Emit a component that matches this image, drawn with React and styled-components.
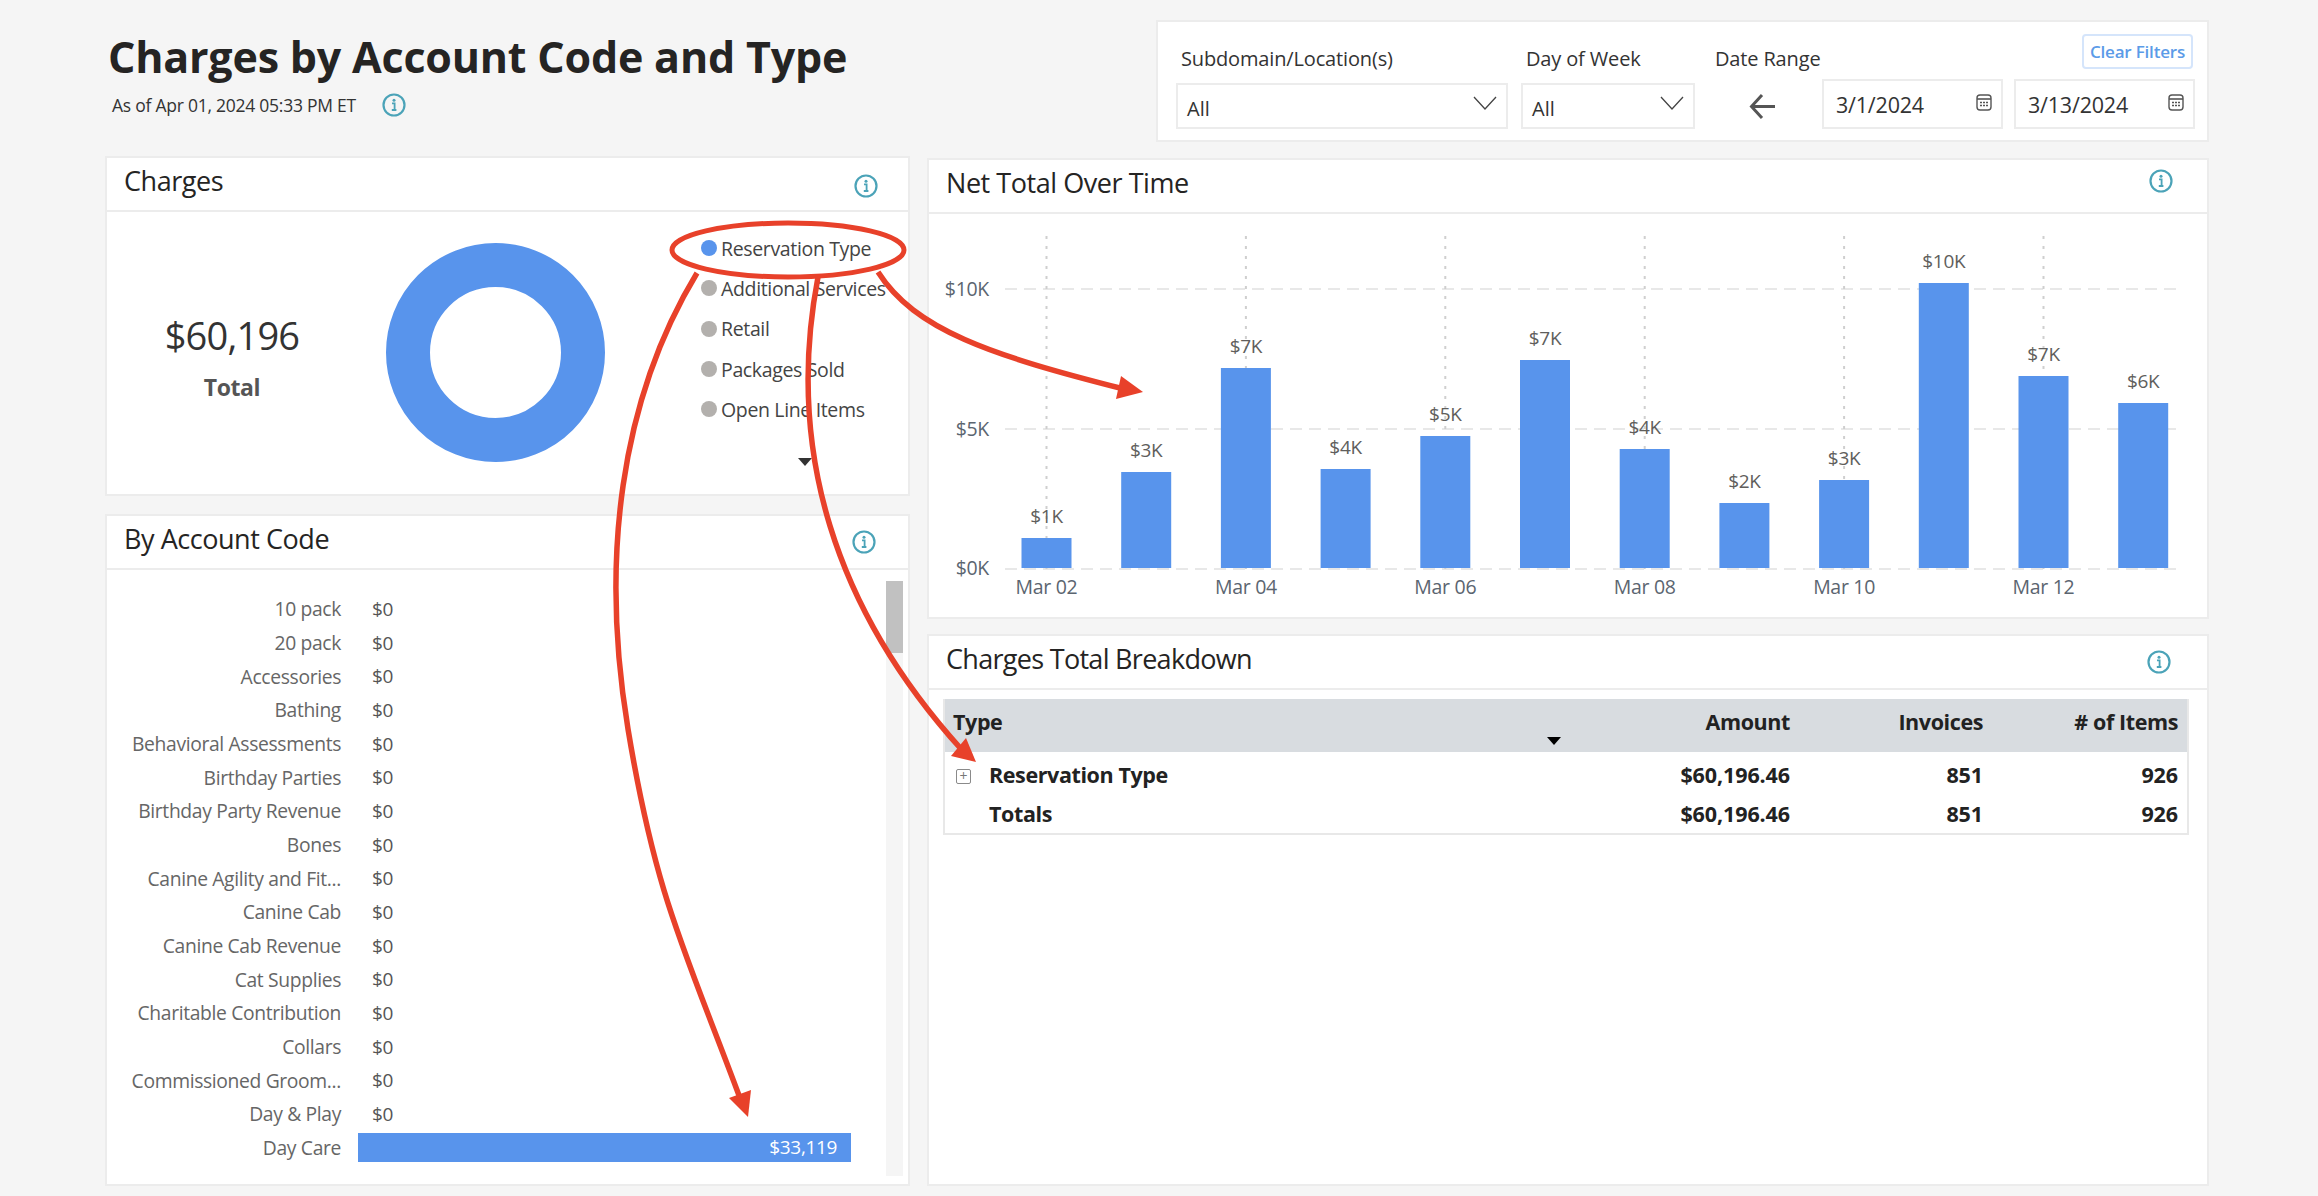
import React from "react";
import styled, { createGlobalStyle } from "styled-components";

const GlobalStyle = createGlobalStyle`
	html, body {
		margin: 0;
		padding: 0;
		background: #f5f5f5;
	}
	body {
		font-family: "Open Sans", "Noto Sans", "Liberation Sans", sans-serif;
		color: #252423;
	}
`;

const BLUE = "#5894ec";
const RED = "#e8412a";

const accountRows = [
	"10 pack",
	"20 pack",
	"Accessories",
	"Bathing",
	"Behavioral Assessments",
	"Birthday Parties",
	"Birthday Party Revenue",
	"Bones",
	"Canine Agility and Fit...",
	"Canine Cab",
	"Canine Cab Revenue",
	"Cat Supplies",
	"Charitable Contribution",
	"Collars",
	"Commissioned Groom...",
	"Day & Play",
];

const legendItems = [
	{ label: "Reservation Type", active: true },
	{ label: "Additional Services" },
	{ label: "Retail" },
	{ label: "Packages Sold" },
	{ label: "Open Line Items" },
];

const bars = [
	{ h: 30, label: "$1K" },
	{ h: 96, label: "$3K" },
	{ h: 200, label: "$7K" },
	{ h: 99, label: "$4K" },
	{ h: 132, label: "$5K" },
	{ h: 208, label: "$7K" },
	{ h: 119, label: "$4K" },
	{ h: 65, label: "$2K" },
	{ h: 88, label: "$3K" },
	{ h: 285, label: "$10K" },
	{ h: 192, label: "$7K" },
	{ h: 165, label: "$6K" },
];

const dates = ["Mar 02", "Mar 04", "Mar 06", "Mar 08", "Mar 10", "Mar 12"];

const InfoIcon = () => (
	<svg width="26" height="26" viewBox="0 0 26 26" fill="none">
		<circle cx="13" cy="13" r="10.5" stroke="#4ba3b8" strokeWidth="2.2" />
		<circle cx="13" cy="8.2" r="1.5" fill="#4ba3b8" />
		<path d="M11 11.4h2.6v6.4M10.8 18h4.6" stroke="#4ba3b8" strokeWidth="1.8" />
	</svg>
);

const Chevron = () => (
	<svg width="24" height="15" viewBox="0 0 24 15" fill="none">
		<path d="M1 1l11 12L23 1" stroke="#444" strokeWidth="1.3" />
	</svg>
);

const CalendarIcon = () => (
	<svg width="16" height="17" viewBox="0 0 16 17" fill="none">
		<rect x="1" y="1" width="14" height="15" rx="3" stroke="#555" strokeWidth="1.4" />
		<path d="M1 5h14" stroke="#555" strokeWidth="1.6" />
		<path d="M4 8.5h2M7 8.5h2M10 8.5h2M4 11.5h2M7 11.5h2M10 11.5h2" stroke="#555" strokeWidth="1.3" />
	</svg>
);

const Chart = () => (
	<ChartSvg viewBox="0 0 1278 402">
		{[75, 215, 355].map((y) => (
			<line key={y} x1="76" x2="1254" y1={y} y2={y} stroke="#e8e8e8" strokeWidth="2" strokeDasharray="12 7" />
		))}
		{dates.map((d, i) => (
			<line key={d} x1={117.5 + i * 199.4} x2={117.5 + i * 199.4} y1="22" y2="360" stroke="#cfcfcf" strokeWidth="2" strokeDasharray="3 7" />
		))}
		{bars.map((b, i) => {
			const x = 92.5 + i * 99.7;
			const top = 354 - b.h;
			return (
				<g key={i}>
					<rect x={x} y={top} width="50" height={b.h} fill={BLUE} />
					<ChartLabel x={x + 25} y={top - 15} textAnchor="middle">
						{b.label}
					</ChartLabel>
				</g>
			);
		})}
		{[
			["$10K", 82],
			["$5K", 222],
			["$0K", 361],
		].map(([t, y]) => (
			<ChartAxis key={t} x="60" y={y} textAnchor="end">
				{t}
			</ChartAxis>
		))}
		{dates.map((d, i) => (
			<ChartAxis key={d} x={117.5 + i * 199.4} y="380" textAnchor="middle">
				{d}
			</ChartAxis>
		))}
	</ChartSvg>
);

const Annotations = () => (
	<Overlay viewBox="0 0 2318 1196">
		<ellipse cx="788" cy="250" rx="116" ry="27" fill="none" stroke={RED} strokeWidth="5" />
		<g fill="none" stroke={RED} strokeWidth="5.5">
			<path d="M878 272C915 330 990 355 1124 389" />
			<path d="M697 273C620 400 600 560 628 729S685 950 740 1098" />
			<path d="M818 277C785 450 835 610 962 750" />
		</g>
		<g fill={RED}>
			<path d="M1143 392L1121 376L1116 399Z" />
			<path d="M748 1117L729 1098L751 1090Z" />
			<path d="M976 762L951 756L966 738Z" />
		</g>
	</Overlay>
);

export default function App() {
	return (
		<Page>
			<GlobalStyle />
			<TopRow>
				<div>
					<PageTitle>Charges by Account Code and Type</PageTitle>
					<AsOf>
						As of Apr 01, 2024 05:33 PM ET
						<InfoIcon />
					</AsOf>
				</div>
				<Filters>
					<Field $width={332}>
						<FieldLabel>Subdomain/Location(s)</FieldLabel>
						<Select>
							All
							<Chevron />
						</Select>
					</Field>
					<Field $width={174}>
						<FieldLabel>Day of Week</FieldLabel>
						<Select>
							All
							<Chevron />
						</Select>
					</Field>
					<DateGroup>
						<DateHead>
							<DateLabel>Date Range</DateLabel>
							<ClearButton>Clear Filters</ClearButton>
						</DateHead>
						<DateInputs>
							<BackArrow width="27" height="27" viewBox="0 0 27 27" fill="none">
								<path d="M26 13.5H3M13 2L2.5 13.5 13 25" stroke="#555" strokeWidth="3" />
							</BackArrow>
							<DateInput>
								3/1/2024
								<CalendarIcon />
							</DateInput>
							<DateInput>
								3/13/2024
								<CalendarIcon />
							</DateInput>
						</DateInputs>
					</DateGroup>
				</Filters>
			</TopRow>

			<Columns>
				<LeftColumn>
					<Card $height={340}>
						<CardHeader $iconRight={29} $iconShift={4}>
							<CardTitle>Charges</CardTitle>
							<InfoIcon />
						</CardHeader>
						<ChargesBody>
							<TotalBlock>
								<TotalValue>$60,196</TotalValue>
								<TotalLabel>Total</TotalLabel>
							</TotalBlock>
							<Donut width="219" height="219" viewBox="0 0 219 219">
								<circle cx="109.5" cy="109.5" r="87.5" fill="none" stroke={BLUE} strokeWidth="44" />
							</Donut>
							<Legend>
								{legendItems.map((item) => (
									<LegendItem key={item.label}>
										<LegendDot $active={item.active} />
										{item.label}
									</LegendItem>
								))}
								<LegendMore />
							</Legend>
						</ChargesBody>
					</Card>
					<Card $height={672}>
						<CardHeader $iconRight={31} $iconShift={0}>
							<CardTitle>By Account Code</CardTitle>
							<InfoIcon />
						</CardHeader>
						<AccountBody>
							<AccountList>
								{accountRows.map((name) => (
									<AccountRow key={name}>
										<AccountName>{name}</AccountName>
										<AccountZero>$0</AccountZero>
									</AccountRow>
								))}
								<AccountRow>
									<AccountName>Day Care</AccountName>
									<AccountBar>$33,119</AccountBar>
								</AccountRow>
							</AccountList>
							<ScrollTrack>
								<ScrollThumb />
							</ScrollTrack>
						</AccountBody>
					</Card>
				</LeftColumn>

				<RightColumn>
					<Card $height={461}>
						<CardHeader $iconRight={33} $iconShift={-10}>
							<CardTitle>Net Total Over Time</CardTitle>
							<InfoIcon />
						</CardHeader>
						<Chart />
					</Card>
					<Card $height={552}>
						<CardHeader $iconRight={35} $iconShift={0}>
							<CardTitle $tight>Charges Total Breakdown</CardTitle>
							<InfoIcon />
						</CardHeader>
						<TableWrap>
							<Table>
								<colgroup>
									<col width="595" />
									<col width="260" />
									<col width="193" />
									<col />
								</colgroup>
								<thead>
									<tr>
										<HeadCell $left>
											Type
											<SortMark />
										</HeadCell>
										<HeadCell>Amount</HeadCell>
										<HeadCell>Invoices</HeadCell>
										<HeadCell># of Items</HeadCell>
									</tr>
								</thead>
								<tbody>
									<tr>
										<TypeCell>
											<ExpandBox>+</ExpandBox>
											Reservation Type
										</TypeCell>
										<NumCell>$60,196.46</NumCell>
										<NumCell>851</NumCell>
										<NumCell>926</NumCell>
									</tr>
									<tr>
										<TypeCell>Totals</TypeCell>
										<NumCell>$60,196.46</NumCell>
										<NumCell>851</NumCell>
										<NumCell>926</NumCell>
									</tr>
								</tbody>
							</Table>
						</TableWrap>
					</Card>
				</RightColumn>
			</Columns>
			<Annotations />
		</Page>
	);
}

const Page = styled.div`
	position: relative;
	width: 2318px;
	height: 1196px;
	box-sizing: border-box;
	padding: 20px 109px 0 105px;
	overflow: hidden;
	background: #f5f5f5;
`;

const Overlay = styled.svg`
	position: absolute;
	left: 0;
	top: 0;
	width: 2318px;
	height: 1196px;
	pointer-events: none;
`;

const TopRow = styled.div`
	display: flex;
	justify-content: space-between;
	height: 136px;
`;

const PageTitle = styled.h1`
	margin: 9px 0 1px 3px;
	font-size: 43px;
	line-height: 56px;
	font-weight: 700;
	letter-spacing: -0.2px;
	white-space: nowrap;
`;

const AsOf = styled.div`
	display: flex;
	align-items: center;
	gap: 25px;
	height: 38px;
	margin-left: 7px;
	font-size: 17.5px;
	letter-spacing: -0.25px;
	color: #333;
`;

const Filters = styled.div`
	display: flex;
	box-sizing: border-box;
	width: 1053px;
	height: 122px;
	padding: 12px 10px 0 18px;
	gap: 13px;
	background: #fff;
	border: 2px solid #ececec;
`;

const Field = styled.div`
	width: ${(p) => p.$width}px;
	padding-top: 12px;
`;

const FieldLabel = styled.div`
	height: 26px;
	margin-left: 5px;
	margin-bottom: 11px;
	font-size: 20px;
	line-height: 26px;
	font-weight: 500;
	letter-spacing: -0.15px;
	color: #333;
	white-space: nowrap;
`;

const Select = styled.div`
	display: flex;
	align-items: center;
	justify-content: space-between;
	box-sizing: border-box;
	height: 46px;
	padding: 4px 9px 0 9px;
	border: 2px solid #ececec;
	background: #fff;
	font-size: 20px;
	color: #333;
	svg {
		margin-top: -10px;
	}
`;

const DateGroup = styled.div`
	width: 481px;
	margin-left: 7px;
`;

const DateHead = styled.div`
	display: flex;
	justify-content: space-between;
	height: 45px;
	padding-right: 3px;
`;

const DateLabel = styled.div`
	margin-top: 12px;
	font-size: 20px;
	line-height: 26px;
	font-weight: 500;
	letter-spacing: -0.15px;
	color: #333;
`;

const ClearButton = styled.button`
	box-sizing: border-box;
	width: 111px;
	height: 35px;
	padding: 0;
	border: 2px solid #d5e5fb;
	border-radius: 4px;
	background: #fff;
	color: #5b9be8;
	font-family: inherit;
	font-size: 17px;
	font-weight: 600;
	letter-spacing: -0.2px;
	white-space: nowrap;
`;

const DateInputs = styled.div`
	display: flex;
	align-items: flex-start;
	gap: 11px;
`;

const BackArrow = styled.svg`
	margin: 14px 35px 0 34px;
`;

const DateInput = styled.div`
	display: flex;
	align-items: center;
	justify-content: space-between;
	box-sizing: border-box;
	width: 181px;
	height: 50px;
	padding: 0 9px 0 12px;
	border: 2px solid #ececec;
	background: #fff;
	font-size: 21.5px;
	letter-spacing: -0.2px;
	color: #333;
	svg {
		margin-top: -4px;
	}
`;

const Columns = styled.div`
	display: flex;
	gap: 17px;
`;

const LeftColumn = styled.div`
	display: flex;
	flex-direction: column;
	gap: 18px;
	width: 805px;
`;

const RightColumn = styled.div`
	display: flex;
	flex-direction: column;
	gap: 15px;
	width: 1282px;
	margin-top: 2px;
`;

const Card = styled.section`
	box-sizing: border-box;
	height: ${(p) => p.$height}px;
	background: #fff;
	border: 2px solid #ececec;
`;

const CardHeader = styled.header`
	display: flex;
	align-items: center;
	justify-content: space-between;
	box-sizing: border-box;
	height: 54px;
	padding: 0 ${(p) => p.$iconRight}px 0 17px;
	border-bottom: 2px solid #ececec;
	svg {
		margin-top: ${(p) => p.$iconShift}px;
	}
`;

const CardTitle = styled.h2`
	margin: -7px 0 0;
	font-size: 27px;
	line-height: 34px;
	font-weight: 500;
	letter-spacing: ${(p) => (p.$tight ? "-0.7px" : "-0.45px")};
	color: #252423;
`;

const ChargesBody = styled.div`
	display: flex;
	height: 282px;
`;

const TotalBlock = styled.div`
	width: 250px;
	padding-top: 98px;
	text-align: center;
`;

const TotalValue = styled.div`
	font-size: 38px;
	line-height: 50px;
	letter-spacing: -0.8px;
	color: #333;
`;

const TotalLabel = styled.div`
	margin-top: 9px;
	font-size: 23px;
	line-height: 36px;
	font-weight: 700;
	letter-spacing: -0.4px;
	color: #555;
`;

const Donut = styled.svg`
	margin: 31px 0 0 29px;
`;

const Legend = styled.div`
	position: relative;
	margin-left: 96px;
	padding-top: 16px;
`;

const LegendItem = styled.div`
	display: flex;
	align-items: center;
	gap: 4px;
	height: 40.3px;
	font-size: 19.5px;
	letter-spacing: -0.35px;
	color: #444;
	white-space: nowrap;
`;

const LegendDot = styled.span`
	width: 16px;
	height: 16px;
	border-radius: 50%;
	background: ${(p) => (p.$active ? BLUE : "#b3b0ad")};
`;

const LegendMore = styled.span`
	display: block;
	width: 0;
	height: 0;
	margin: 29px 0 0 97px;
	border-left: 7px solid transparent;
	border-right: 7px solid transparent;
	border-top: 8px solid #333;
`;

const AccountBody = styled.div`
	display: flex;
	padding: 11px 5px 0 2px;
`;

const AccountList = styled.div`
	width: 742px;
	margin-right: 35px;
	padding-top: 11px;
`;

const AccountRow = styled.div`
	display: grid;
	grid-template-columns: 232px 493px;
	column-gap: 17px;
	align-items: center;
	height: 33.68px;
`;

const AccountName = styled.div`
	font-size: 19.3px;
	letter-spacing: -0.35px;
	text-align: right;
	color: #666;
	white-space: nowrap;
`;

const AccountZero = styled.div`
	padding-left: 14px;
	font-size: 19px;
	letter-spacing: -0.35px;
	color: #555;
`;

const AccountBar = styled.div`
	box-sizing: border-box;
	height: 29px;
	padding-right: 14px;
	background: ${BLUE};
	color: #fff;
	font-size: 19px;
	line-height: 29px;
	letter-spacing: -0.35px;
	text-align: right;
`;

const ScrollTrack = styled.div`
	width: 17px;
	height: 595px;
	background: #f5f5f5;
`;

const ScrollThumb = styled.div`
	height: 72px;
	background: #c1c1c1;
`;

const ChartSvg = styled.svg`
	display: block;
	width: 1278px;
	height: 402px;
`;

const ChartLabel = styled.text`
	font-size: 19px;
	letter-spacing: -0.3px;
	fill: #605e5c;
`;

const ChartAxis = styled.text`
	font-size: 19.5px;
	letter-spacing: -0.3px;
	fill: #5b6570;
`;

const TableWrap = styled.div`
	padding: 9px 18px 0 14px;
`;

const Table = styled.table`
	width: 100%;
	table-layout: fixed;
	border-collapse: collapse;
	border: 2px solid #e8e8e8;
	border-top: 0;
	font-size: 21.5px;
	font-weight: 700;
	letter-spacing: -0.4px;
	tbody tr:first-child td {
		padding-top: 3px;
	}
`;

const HeadCell = styled.th`
	position: relative;
	height: 45px;
	padding: 0 9px 8px 8px;
	background: #d8dce0;
	text-align: ${(p) => (p.$left ? "left" : "right")};
	font-weight: 700;
	color: #222;
`;

const SortMark = styled.span`
	position: absolute;
	z-index: 1;
	right: -22px;
	bottom: 7px;
	width: 0;
	height: 0;
	border-left: 7px solid transparent;
	border-right: 7px solid transparent;
	border-top: 8px solid #000;
`;

const TypeCell = styled.td`
	position: relative;
	height: 39px;
	padding: 0 0 0 44px;
	color: #222;
`;

const ExpandBox = styled.span`
	position: absolute;
	left: 11px;
	top: 17px;
	box-sizing: border-box;
	width: 15px;
	height: 15px;
	border: 1px solid #8a8a8a;
	border-radius: 2px;
	font-size: 14px;
	line-height: 12px;
	font-weight: 400;
	text-align: center;
	letter-spacing: 0;
	color: #777;
`;

const NumCell = styled.td`
	padding: 0 9px 0 0;
	text-align: right;
	letter-spacing: -0.1px;
	color: #222;
`;
